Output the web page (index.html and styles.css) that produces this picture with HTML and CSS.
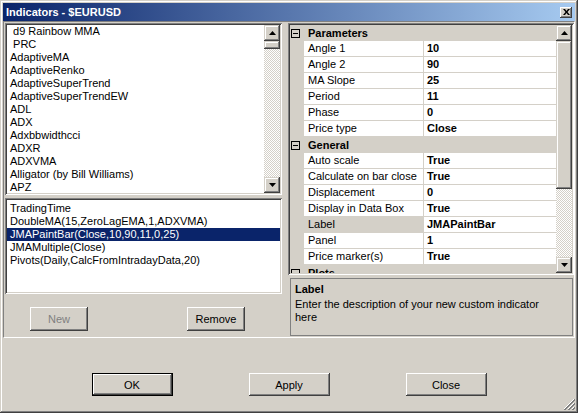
FILE: index.html
```html
<!DOCTYPE html>
<html>
<head>
<meta charset="utf-8">
<title>Indicators - $EURUSD</title>
<link rel="stylesheet" href="styles.css">
</head>
<body>
<div class="window">
  <div class="titlebar">
    <span class="title">Indicators - $EURUSD</span>
    <span class="cap-btn"><svg width="7" height="6" viewBox="0 0 7 6"><path d="M0 0h2l1.5 2 1.5-2h2l-2.5 3 2.5 3h-2l-1.5-2-1.5 2h-2l2.5-3z" fill="#000"/></svg></span>
  </div>
  <div class="client">
    <div class="split">
      <div class="left">
        <div class="listbox top-list">
          <ul class="items">
            <li>&nbsp;d9 Rainbow MMA</li>
            <li>&nbsp;PRC</li>
            <li>AdaptiveMA</li>
            <li>AdaptiveRenko</li>
            <li>AdaptiveSuperTrend</li>
            <li>AdaptiveSuperTrendEW</li>
            <li>ADL</li>
            <li>ADX</li>
            <li>Adxbbwidthcci</li>
            <li>ADXR</li>
            <li>ADXVMA</li>
            <li>Alligator (by Bill Williams)</li>
            <li>APZ</li>
          </ul>
          <div class="vscroll">
            <span class="sbtn"><svg width="7" height="4" viewBox="0 0 7 4"><path d="M3.5 0L7 4H0z" fill="#000"/></svg></span>
            <span class="thumb small"></span>
            <span class="track"></span>
            <span class="sbtn"><svg width="7" height="4" viewBox="0 0 7 4"><path d="M0 0h7L3.5 4z" fill="#000"/></svg></span>
          </div>
        </div>
        <div class="listbox bottom-list">
          <ul class="items">
            <li>TradingTime</li>
            <li>DoubleMA(15,ZeroLagEMA,1,ADXVMA)</li>
            <li class="sel">JMAPaintBar(Close,10,90,11,0,25)</li>
            <li>JMAMultiple(Close)</li>
            <li>Pivots(Daily,CalcFromIntradayData,20)</li>
          </ul>
        </div>
        <div class="left-buttons">
          <button class="btn small-btn disabled">New</button>
          <button class="btn small-btn">Remove</button>
        </div>
      </div>
      <div class="splitter"></div>
      <div class="right">
        <div class="grid">
          <div class="rows">
            <div class="cat"><span class="toggle"></span><span class="cname">Parameters</span></div>
            <div class="prop"><span class="pname">Angle 1</span><span class="pval">10</span></div>
            <div class="prop"><span class="pname">Angle 2</span><span class="pval">90</span></div>
            <div class="prop"><span class="pname">MA Slope</span><span class="pval">25</span></div>
            <div class="prop"><span class="pname">Period</span><span class="pval">11</span></div>
            <div class="prop"><span class="pname">Phase</span><span class="pval">0</span></div>
            <div class="prop"><span class="pname">Price type</span><span class="pval">Close</span></div>
            <div class="cat"><span class="toggle"></span><span class="cname">General</span></div>
            <div class="prop"><span class="pname">Auto scale</span><span class="pval">True</span></div>
            <div class="prop"><span class="pname">Calculate on bar close</span><span class="pval">True</span></div>
            <div class="prop"><span class="pname">Displacement</span><span class="pval">0</span></div>
            <div class="prop"><span class="pname">Display in Data Box</span><span class="pval">True</span></div>
            <div class="prop selected"><span class="pname">Label</span><span class="pval">JMAPaintBar</span></div>
            <div class="prop"><span class="pname">Panel</span><span class="pval">1</span></div>
            <div class="prop"><span class="pname">Price marker(s)</span><span class="pval">True</span></div>
            <div class="cat"><span class="toggle"></span><span class="cname">Plots</span></div>
          </div>
          <div class="vscroll">
            <span class="sbtn"><svg width="7" height="4" viewBox="0 0 7 4"><path d="M3.5 0L7 4H0z" fill="#000"/></svg></span>
            <span class="thumb big"></span>
            <span class="track"></span>
            <span class="sbtn"><svg width="7" height="4" viewBox="0 0 7 4"><path d="M0 0h7L3.5 4z" fill="#000"/></svg></span>
          </div>
        </div>
        <div class="desc">
          <div class="desc-title">Label</div>
          <div class="desc-text">Enter the description of your new custom indicator here</div>
        </div>
      </div>
    </div>
    <div class="dialog-buttons">
      <button class="btn wide default">OK</button>
      <button class="btn wide">Apply</button>
      <button class="btn wide">Close</button>
    </div>
    <svg class="grip" width="12" height="12" viewBox="0 0 12 12">
      <path d="M11 1L1 11M11 5L5 11M11 9L9 11" stroke="#fff" stroke-width="1"/>
      <path d="M12 1L1 12M12 2L2 12M12 5L5 12M12 6L6 12M12 9L9 12M12 10L10 12" stroke="#808080" stroke-width="1"/>
    </svg>
  </div>
</div>
</body>
</html>
```

FILE: styles.css
```css
* { box-sizing: border-box; }
html, body { margin: 0; padding: 0; }
body {
  width: 578px;
  height: 413px;
  overflow: hidden;
  background: #d4d0c8;
  font-family: "Liberation Sans", Arial, sans-serif;
  font-size: 11px;
  color: #000;
}
.window {
  width: 578px;
  height: 413px;
  padding: 3px;
  background: #d4d0c8;
  display: flex;
  flex-direction: column;
  box-shadow: inset -1px -1px #404040, inset 1px 1px #d4d0c8, inset -2px -2px #808080, inset 2px 2px #fff;
}
.titlebar {
  height: 18px;
  flex: none;
  display: flex;
  align-items: center;
  justify-content: space-between;
  padding: 0 3px 0 3px;
  background: linear-gradient(to right, #0a246a, #a6caf0);
}
.title {
  color: #fff;
  font-weight: bold;
  font-size: 11px;
}
.cap-btn {
  width: 12px;
  height: 11px;
  background: #d4d0c8;
  display: flex;
  align-items: center;
  justify-content: center;
  box-shadow: inset -1px -1px #404040, inset 1px 1px #fff, inset -2px -2px #808080;
}
.client {
  flex: 1;
  display: flex;
  flex-direction: column;
  position: relative;
}
.split {
  height: 317px;
  flex: none;
  display: flex;
  padding: 1px 0 1px 1px;
  border-top: 1px solid #808080;
  border-left: 1px solid #808080;
  border-right: 1px solid #fff;
  border-bottom: 1px solid #fff;
}
.left {
  width: 277px;
  display: flex;
  flex-direction: column;
}
.splitter { width: 6px; }
.right {
  width: 286px;
  display: flex;
  flex-direction: column;
}
.listbox {
  background: #fff;
  padding: 2px;
  display: flex;
  box-shadow: inset 1px 1px #808080, inset -1px -1px #fff, inset 2px 2px #404040, inset -2px -2px #d4d0c8;
}
.top-list { height: 172px; }
.bottom-list { height: 96px; margin-top: 3px; padding-top: 4px; }
.items {
  list-style: none;
  margin: 0;
  padding: 0;
  flex: 1;
  overflow: hidden;
}
.items li {
  height: 13px;
  line-height: 13px;
  padding-left: 3px;
  white-space: nowrap;
}
.items li.sel { background: #0a246a; color: #fff; }
.vscroll {
  width: 16px;
  flex: none;
  display: flex;
  flex-direction: column;
}
.sbtn {
  height: 16px;
  flex: none;
  background: #d4d0c8;
  display: flex;
  align-items: center;
  justify-content: center;
  box-shadow: inset -1px -1px #404040, inset 1px 1px #d4d0c8, inset -2px -2px #808080, inset 2px 2px #fff;
}
.thumb {
  flex: none;
  background: #d4d0c8;
  box-shadow: inset -1px -1px #404040, inset 1px 1px #d4d0c8, inset -2px -2px #808080, inset 2px 2px #fff;
}
.thumb.small { height: 8px; }
.thumb.big { height: 148px; }
.track {
  flex: 1;
  background-image: repeating-conic-gradient(#d4d0c8 0% 25%, #fff 0% 50%);
  background-size: 2px 2px;
}
.left-buttons {
  flex: 1;
  display: flex;
  padding: 13px 0 0 25px;
  gap: 99px;
}
.btn {
  font-family: "Liberation Sans", Arial, sans-serif;
  font-size: 11px;
  color: #000;
  background: #d4d0c8;
  border: none;
  padding: 0;
  margin: 0;
  box-shadow: inset -1px -1px #404040, inset 1px 1px #fff, inset -2px -2px #808080, inset 2px 2px #d4d0c8;
}
.small-btn { width: 58px; height: 24px; }
.btn.disabled { color: #808080; }
.grid {
  height: 252px;
  display: flex;
  padding: 2px;
  background: #d4d0c8;
  box-shadow: inset 1px 1px #808080, inset -1px -1px #fff, inset 2px 2px #404040, inset -2px -2px #d4d0c8;
}
.rows {
  flex: 1;
  overflow: hidden;
}
.cat {
  height: 16px;
  display: flex;
  align-items: center;
  background: #d4d0c8;
}
.toggle {
  width: 9px;
  height: 9px;
  flex: none;
  margin: 0 8px 0 1px;
  border: 1px solid #000;
  position: relative;
  background: #d4d0c8;
}
.toggle::after {
  content: "";
  position: absolute;
  left: 1px;
  top: 3px;
  width: 5px;
  height: 1px;
  background: #000;
}
.cname { font-weight: bold; line-height: 13px; }
.prop {
  height: 16px;
  display: grid;
  grid-template-columns: 14px 119px 1px 132px;
  background: #d4d0c8;
}
.prop::before { content: ""; grid-column: 1; grid-row: 1; }
.pname {
  grid-column: 2;
  grid-row: 1;
  background: #fff;
  border-bottom: 1px solid #d4d0c8;
  padding-left: 4px;
  line-height: 15px;
  color: #000;
  white-space: nowrap;
}
.pval {
  grid-column: 4;
  grid-row: 1;
  background: #fff;
  border-bottom: 1px solid #d4d0c8;
  padding-left: 3px;
  line-height: 15px;
  font-weight: bold;
}
.prop.selected .pname { background: #d4d0c8; }
.desc {
  height: 59px;
  margin-top: 3px;
  margin-right: 1px;
  margin-left: 2px;
  border: 1px solid #808080;
  padding: 3px 4px;
}
.desc-title { font-weight: bold; line-height: 14px; }
.desc-text { line-height: 13px; margin-top: 2px; max-width: 255px; }
.dialog-buttons {
  flex: 1;
  display: flex;
  justify-content: center;
  gap: 76px;
  padding-top: 35px;
}
.wide { width: 81px; height: 23px; }
.btn.default {
  box-shadow: inset 0 0 0 1px #000, inset -2px -2px #404040, inset 2px 2px #fff, inset -3px -3px #808080;
}
.grip {
  position: absolute;
  right: 0;
  bottom: 0;
}
```
